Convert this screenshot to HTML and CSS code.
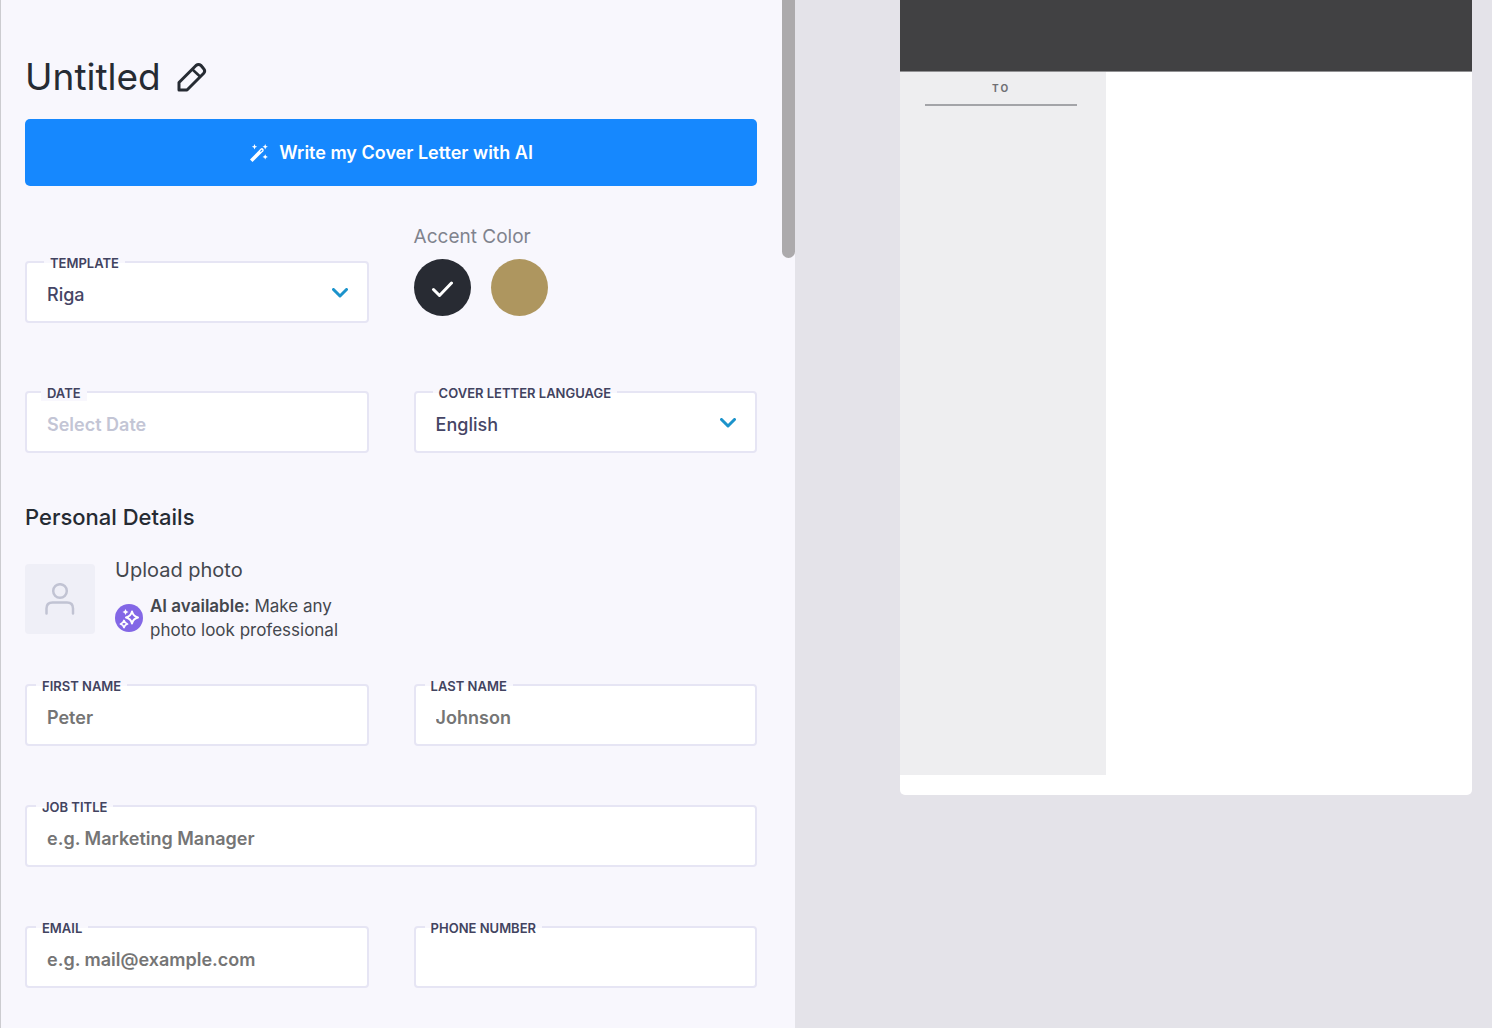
FILE: index.html
```html
<!DOCTYPE html>
<html lang="en">
<head>
    <meta charset="utf-8">
    <title>Cover Letter</title>
    <link rel="stylesheet" href="styles.css">
</head>
<body>
    <div class="app">
        <main class="editor">
            <form class="editor-form">
                <div class="title-row">
                    <h1 class="title">Untitled</h1>
                    <button type="button" class="edit-button" aria-label="Rename">
                        <svg width="30" height="30" viewBox="0 0 30 30" fill="none" stroke="currentColor" stroke-width="3" stroke-linejoin="round">
                            <path d="M2 28V20.500L19 3.500Q21.500 1.500 24 3.500L26.500 6.500Q28.800 9 26.500 11.500L10 28Z"/>
                            <path d="M15.500 7.500L23 14.500" stroke-width="2.500"/>
                        </svg>
                    </button>
                </div>

                <button type="button" class="ai-button">
                    <svg width="20" height="20" viewBox="0 0 20 20" fill="currentColor">
                        <path d="M1 16.500L11.800 5.500Q13 4.600 14.200 5.700Q15.300 7 14.300 8.200L3.500 19Z"/>
                        <path d="M11 8.200L12.800 6.500L13.500 7.200L11.800 9Z" fill="#1688fe"/>
                        <path d="M5.500 1L6.300 2.900L8.200 3.700L6.300 4.500L5.500 6.400L4.700 4.500L2.800 3.700L4.700 2.900Z"/>
                        <path d="M16.200 1L17 2.900L18.900 3.700L17 4.500L16.200 6.400L15.400 4.500L13.500 3.700L15.400 2.900Z"/>
                        <path d="M16.200 11.200L17 13.100L18.900 13.900L17 14.700L16.200 16.600L15.400 14.700L13.500 13.900L15.400 13.100Z"/>
                    </svg>
                    <span>Write my Cover Letter with AI</span>
                </button>

                <div class="row row-template">
                    <div class="field">
                        <label class="field-label select-label" for="template">TEMPLATE</label>
                        <select class="control" id="template">
                            <option>Riga</option>
                        </select>
                        <svg class="chevron" width="16" height="10" viewBox="0 0 16 10"><path d="M1.500 1.500L8 8L14.500 1.500"/></svg>
                    </div>
                    <fieldset class="accent">
                        <legend class="accent-label">Accent Color</legend>
                        <div class="swatches">
                            <label class="swatch">
                                <input type="radio" name="accent" class="swatch-input dark" aria-label="Dark" checked>
                                <svg class="swatch-check" width="22" height="18" viewBox="0 0 22 18"><path d="M2.500 9.500L8.500 15.500L20.500 3"/></svg>
                            </label>
                            <label class="swatch">
                                <input type="radio" name="accent" class="swatch-input gold" aria-label="Gold">
                            </label>
                        </div>
                    </fieldset>
                </div>

                <div class="row row-date">
                    <div class="field">
                        <label class="field-label date-label" for="date">DATE</label>
                        <input class="control date" id="date" type="text" placeholder="Select Date">
                    </div>
                    <div class="field">
                        <label class="field-label select-label" for="language">COVER LETTER LANGUAGE</label>
                        <select class="control" id="language">
                            <option>English</option>
                        </select>
                        <svg class="chevron" width="16" height="10" viewBox="0 0 16 10"><path d="M1.500 1.500L8 8L14.500 1.500"/></svg>
                    </div>
                </div>

                <h2 class="section-title">Personal Details</h2>

                <div class="photo-row">
                    <button type="button" class="photo-button" aria-label="Upload photo">
                        <svg width="30" height="32" viewBox="0 0 30 32" fill="none" stroke="currentColor" stroke-width="2.500" stroke-linecap="round">
                            <circle cx="15" cy="8" r="6.800"/>
                            <path d="M1.500 30.500V25.500Q1.500 19.500 7.500 19.500H22Q28 19.500 28 25.500V30.500"/>
                        </svg>
                    </button>
                    <div class="photo-info">
                        <div class="photo-title">Upload photo</div>
                        <div class="photo-hint">
                            <svg class="ai-badge" width="28" height="28" viewBox="0 0 28 28">
                                <circle cx="14" cy="14" r="14" fill="#8367e6"/>
                                <path d="M17 7.500Q18.200 12.300 23 13.500Q18.200 14.700 17 19.500Q15.800 14.700 11 13.500Q15.800 12.300 17 7.500Z" fill="none" stroke="#fff" stroke-width="2" stroke-linejoin="round"/>
                                <path d="M9 16.500Q9.700 19.300 12.500 20Q9.700 20.700 9 23.500Q8.300 20.700 5.500 20Q8.300 19.300 9 16.500Z" fill="none" stroke="#fff" stroke-width="1.800" stroke-linejoin="round"/>
                                <path d="M10.500 5L11.500 7L13.500 8L11.500 9L10.500 11L9.500 9L7.500 8L9.500 7Z" fill="#fff"/>
                            </svg>
                            <p class="photo-text"><strong>AI available:</strong> Make any photo look professional</p>
                        </div>
                    </div>
                </div>

                <div class="row row-details">
                    <div class="field">
                        <label class="field-label" for="first-name">FIRST NAME</label>
                        <input class="control" id="first-name" type="text" placeholder="Peter">
                    </div>
                    <div class="field">
                        <label class="field-label" for="last-name">LAST NAME</label>
                        <input class="control" id="last-name" type="text" placeholder="Johnson">
                    </div>
                    <div class="field wide">
                        <label class="field-label" for="job-title">JOB TITLE</label>
                        <input class="control" id="job-title" type="text" placeholder="e.g. Marketing Manager">
                    </div>
                    <div class="field">
                        <label class="field-label" for="email">EMAIL</label>
                        <input class="control" id="email" type="email" placeholder="e.g. mail@example.com">
                    </div>
                    <div class="field">
                        <label class="field-label" for="phone">PHONE NUMBER</label>
                        <input class="control" id="phone" type="tel">
                    </div>
                </div>
            </form>
            <div class="scroll-rail">
                <div class="scroll-thumb"></div>
            </div>
        </main>

        <aside class="preview">
            <div class="paper">
                <div class="paper-header"></div>
                <div class="paper-side">
                    <div class="paper-to">TO</div>
                </div>
            </div>
        </aside>
    </div>
</body>
</html>
```

FILE: styles.css
```css
* {
    box-sizing: border-box;
}

body {
    margin: 0;
    background-color: #e4e3e9;
    font-family: Inter, "Open Sans", sans-serif;
    color: #262b33;
}

button, input, select {
    font-family: inherit;
}

.app {
    display: flex;
    height: 100vh;
    overflow: hidden;
}

/* editor */

.editor {
    display: flex;
    width: 53.3%;
    background-color: #f8f7fd;
    border-left: 1px solid #ccccd0;
}

.editor-form {
    flex: 1;
    min-width: 0;
    padding: 49px 25px 24px 24px;
}

.scroll-rail {
    width: 13px;
}

.scroll-thumb {
    height: 258px;
    background-color: #acaaac;
    border-radius: 0 0 7px 7px;
}

.title-row {
    display: flex;
    align-items: center;
    gap: 16px;
    margin-bottom: 14px;
}

.title {
    margin: 0;
    font-size: 37px;
    line-height: 56px;
    font-weight: 400;
}

.edit-button {
    display: flex;
    padding: 0;
    border: none;
    background: none;
    color: #262b33;
}

.ai-button {
    display: flex;
    align-items: center;
    justify-content: center;
    gap: 10px;
    width: 100%;
    height: 67px;
    border: none;
    border-radius: 5px;
    background-color: #1688fe;
    color: #fff;
    font-size: 18px;
    font-weight: 600;
}

.row {
    display: grid;
    grid-template-columns: 1fr 1fr;
    gap: 60px 45px;
}

.row-template {
    align-items: end;
    margin-top: 38px;
}

.row-date {
    margin-top: 68px;
}

.row-details {
    row-gap: 59px;
    margin-top: 42px;
}

.wide {
    grid-column: span 2;
}

.field {
    position: relative;
}

.field-label {
    position: absolute;
    top: -6px;
    left: 11px;
    padding: 0 6px;
    background: linear-gradient(#f8f7fd 50%, #fff 50%);
    color: #424360;
    font-size: 13px;
    line-height: 16px;
    font-weight: 600;
}

.select-label {
    left: 19px;
}

.date-label {
    left: 16px;
    background: #f8f7fd;
}

.control {
    display: block;
    width: 100%;
    height: 62px;
    padding: 4px 20px 0;
    border: 2px solid #e6e5f4;
    border-radius: 4px;
    background-color: #fff;
    color: #454565;
    font-size: 18px;
    font-weight: 500;
    appearance: none;
}

.control::placeholder {
    color: #757575;
    font-weight: 600;
    opacity: 1;
}

.date::placeholder {
    color: #c3c5d5;
}

.chevron {
    position: absolute;
    top: 27px;
    right: 21px;
    fill: none;
    stroke: #1c93cb;
    stroke-width: 3;
    stroke-linecap: round;
    stroke-linejoin: round;
    pointer-events: none;
}

.accent {
    margin: 0;
    padding: 0 0 7px;
    border: none;
}

.accent-label {
    padding: 0;
    margin-bottom: 10px;
    color: #80838d;
    font-size: 19px;
    line-height: 25px;
}

.swatches {
    display: flex;
    gap: 20px;
}

.swatch {
    display: grid;
    place-items: center;
    position: relative;
}

.swatch-input {
    width: 57px;
    height: 57px;
    margin: 0;
    border-radius: 50%;
    appearance: none;
}

.dark {
    background-color: #282b33;
}

.gold {
    background-color: #ae965f;
}

.swatch-check {
    position: absolute;
    top: 21px;
    fill: none;
    stroke: #fff;
    stroke-width: 3;
    stroke-linecap: round;
    stroke-linejoin: round;
}

.section-title {
    margin: 50px 0 27px;
    font-size: 22px;
    line-height: 28px;
    font-weight: 500;
}

.photo-row {
    display: flex;
    gap: 20px;
}

.photo-button {
    display: flex;
    align-items: center;
    justify-content: center;
    width: 70px;
    height: 70px;
    margin-top: 6px;
    padding: 0;
    border: none;
    border-radius: 4px;
    background-color: #efeff7;
    color: #c1c3d3;
}

.photo-info {
    color: #44474e;
}

.photo-title {
    margin-bottom: 12px;
    font-size: 20px;
    line-height: 24px;
}

.photo-hint {
    display: flex;
    align-items: center;
    gap: 7px;
}

.photo-text {
    max-width: 200px;
    margin: 0;
    font-size: 17px;
    line-height: 24px;
}

.photo-text strong {
    font-weight: 600;
}

/* preview */

.preview {
    flex: 1;
    padding: 0 20px 0 105px;
}

.paper {
    padding-bottom: 20px;
    border-radius: 0 0 5px 5px;
    background-color: #fff;
}

.paper-header {
    height: 72px;
    border-bottom: 1px solid #919193;
    background-color: #414143;
}

.paper-side {
    width: 36%;
    height: 703px;
    padding: 8px 29px 0 25px;
    background-color: #eeeef0;
}

.paper-to {
    padding-bottom: 7px;
    border-bottom: 2px solid #a3a4a8;
    color: #707074;
    font-size: 10px;
    line-height: 17px;
    font-weight: 700;
    letter-spacing: 2px;
    text-align: center;
}
```
